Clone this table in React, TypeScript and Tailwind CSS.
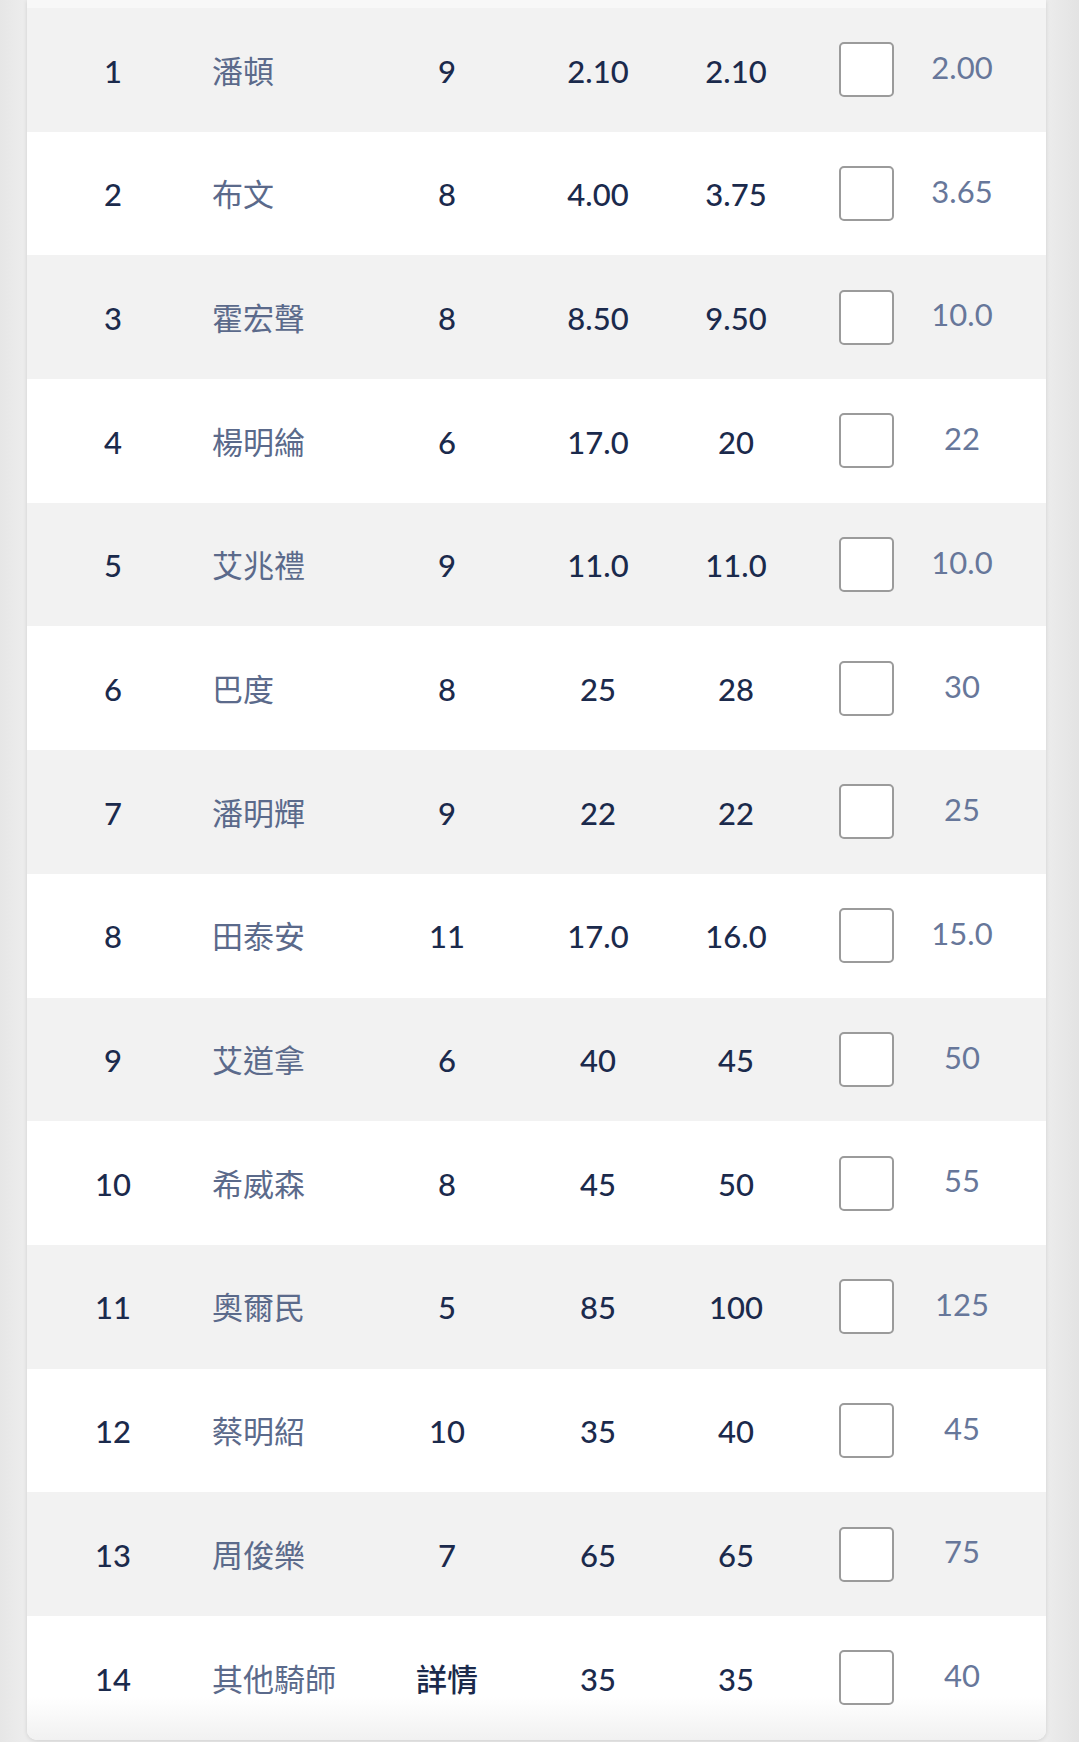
import React from "react";

type Row = {
  no: number;
  name: string;
  weight: string;
  win: string;
  place: string;
  last: string;
};

const rows: Row[] = [
  { no: 1, name: "潘頓", weight: "9", win: "2.10", place: "2.10", last: "2.00" },
  { no: 2, name: "布文", weight: "8", win: "4.00", place: "3.75", last: "3.65" },
  { no: 3, name: "霍宏聲", weight: "8", win: "8.50", place: "9.50", last: "10.0" },
  { no: 4, name: "楊明綸", weight: "6", win: "17.0", place: "20", last: "22" },
  { no: 5, name: "艾兆禮", weight: "9", win: "11.0", place: "11.0", last: "10.0" },
  { no: 6, name: "巴度", weight: "8", win: "25", place: "28", last: "30" },
  { no: 7, name: "潘明輝", weight: "9", win: "22", place: "22", last: "25" },
  { no: 8, name: "田泰安", weight: "11", win: "17.0", place: "16.0", last: "15.0" },
  { no: 9, name: "艾道拿", weight: "6", win: "40", place: "45", last: "50" },
  { no: 10, name: "希威森", weight: "8", win: "45", place: "50", last: "55" },
  { no: 11, name: "奧爾民", weight: "5", win: "85", place: "100", last: "125" },
  { no: 12, name: "蔡明紹", weight: "10", win: "35", place: "40", last: "45" },
  { no: 13, name: "周俊樂", weight: "7", win: "65", place: "65", last: "75" },
  { no: 14, name: "其他騎師", weight: "詳情", win: "35", place: "35", last: "40" },
];

function OddsRow({ row, index }: { row: Row; index: number }) {
  const isLast = index === rows.length - 1;
  const bg =
    index % 2 === 0
      ? "bg-[#f2f2f2]"
      : isLast
      ? "bg-[linear-gradient(to_bottom,#ffffff_65%,#f1f1f1)]"
      : "bg-white";

  return (
    <div className={`flex h-[123.7px] items-center ${bg}`}>
      <div className="w-[172px] pt-[2px] text-center font-medium text-[#1b2a4c]">{row.no}</div>
      <div className="w-[188px] pl-[13px] pt-[2px] text-[#5b6a8b]">{row.name}</div>
      <div className="w-[120px] pt-[2px] text-center font-medium text-[#1b2a4c]">{row.weight}</div>
      <div className="ml-[31px] w-[120px] pt-[2px] text-center font-medium text-[#1b2a4c]">{row.win}</div>
      <div className="ml-[18px] w-[120px] pt-[2px] text-center font-medium text-[#1b2a4c]">{row.place}</div>
      <div className="ml-[43px] h-[55px] w-[55px] rounded-[5px] border-2 border-[#9b9b9b] bg-white"></div>
      <div className="w-[136px] pb-[5px] text-center text-[#67779a]">{row.last}</div>
    </div>
  );
}

export default function App() {
  return (
    <div className="min-h-[1742px] bg-[linear-gradient(to_right,#e6e6e6,#ececec_2%,#ececec_97%,#e3e3e3)] pl-[27px] pr-[33px] pb-[2px] font-['Lato','Noto_Sans_CJK_TC',sans-serif] text-[31px]">
      <div className="overflow-hidden rounded-b-[10px] bg-white shadow-[0_1px_4px_rgba(0,0,0,0.12)]">
        <div className="h-[8px] bg-[#f8f8f8]"></div>
        {rows.map((row, i) => (
          <OddsRow key={row.no} row={row} index={i} />
        ))}
      </div>
    </div>
  );
}
